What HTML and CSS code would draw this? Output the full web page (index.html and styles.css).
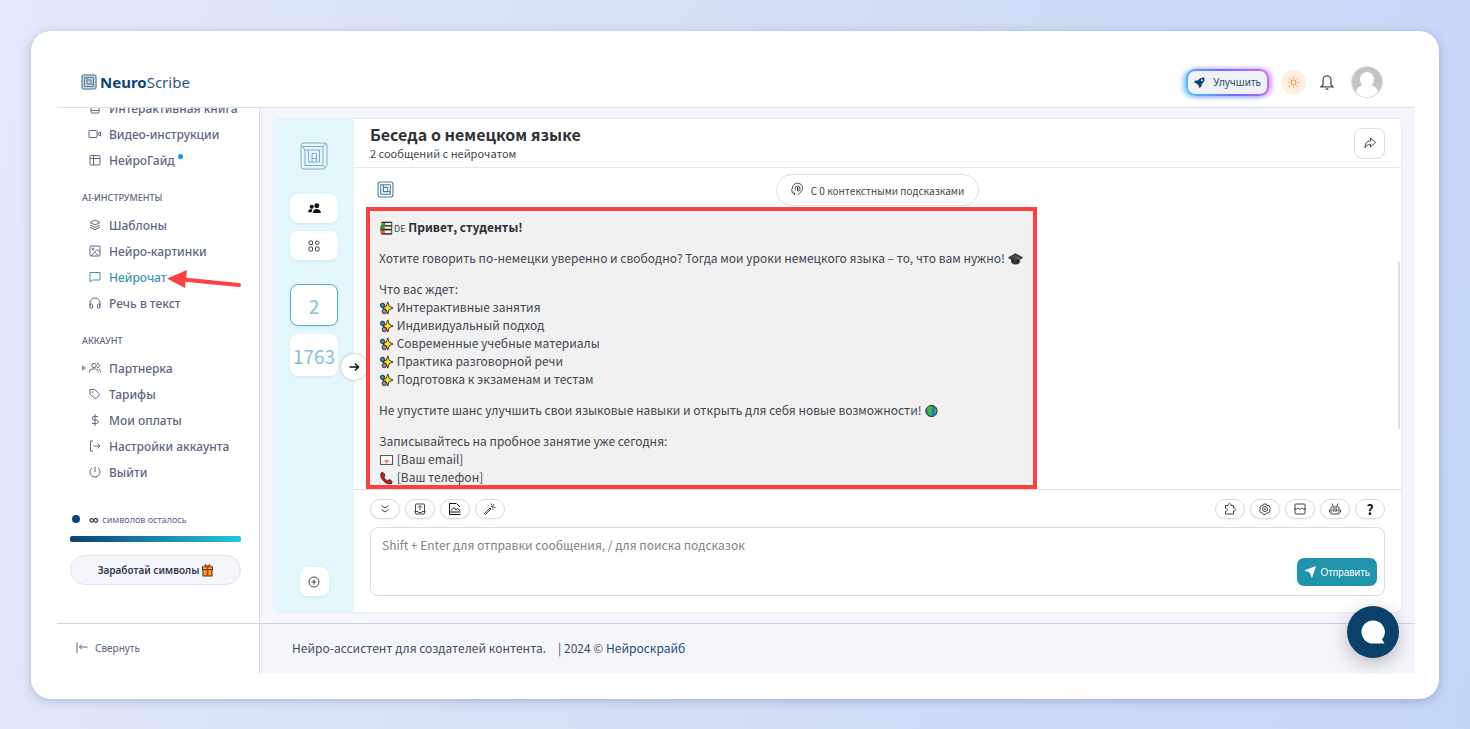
FILE: index.html
```
<!DOCTYPE html>
<html lang="ru">
<head>
  <meta charset="UTF-8">
  <meta name="viewport" content="width=device-width, initial-scale=1.0">
  <title>NeuroScribe</title>
  <link rel="stylesheet" href="styles.css">
</head>
<body>
  <!-- shared icons -->
  <svg class="sprite" aria-hidden="true">
    <symbol id="logo" viewBox="0 0 28 28">
      <path d="M4 1h21q2 0 2 2v20l-3 4H4q-3 0-3-3V4q0-3 3-3z"/>
      <path d="M2 4.500h21v19H5V8h14.500v12H8.500V8M12 20v-8.500h4.500V20M12 16.500h4.500M23 4.500l3-3M23 23.500l2 2M5 8L2 4.500"/>
    </symbol>
    <symbol id="logo-small" viewBox="0 0 16 16">
      <rect x="1" y="1" width="14" height="14" rx="2"/>
      <path d="M3.500 12.500v-9h9v9zM6 3.500V10h6.500M10 10V6H6"/>
    </symbol>
    <symbol id="sparkles" viewBox="0 0 16 16">
      <circle cx="3.500" cy="5" r="2.500" fill="#2a8fb0" stroke="#222"/>
      <circle cx="5.500" cy="12" r="2.500" fill="#c77c95" stroke="#222"/>
      <path d="M9.500 1l1.500 5 4.500 2-4.500 2-1.500 5-1.800-5L3.500 8l4.200-2z" fill="#ffe21f" stroke="#222"/>
    </symbol>
  </svg>

  <div class="card">
    <div class="app">
      <header class="topbar">
        <a class="brand" href="#"><svg class="logo"><use href="#logo-small"/></svg><span><b>Neuro</b>Scribe</span></a>
        <div class="topbar-actions">
          <button class="upgrade" type="button">
            <svg viewBox="0 0 12 12" width="11" height="11"><path d="M11.500.5C8 .3 6 1.500 4.500 3.500L1 4 0 6l2.500.7L5.300 9.500l.2 2.500L8 10.500l.5-3C10.800 6 11.700 4 11.500.5z" fill="#0b4172"/><circle cx="8.500" cy="3.500" r="1" fill="#fff"/></svg>
            Улучшить
          </button>
          <button class="theme" type="button" aria-label="Тема">
            <svg class="icon" viewBox="0 0 24 24"><circle cx="12" cy="12" r="4.500"/><path d="M12 1v3M12 20v3M1 12h3M20 12h3M4.200 4.200l2.100 2.100M17.700 17.700l2.100 2.100M4.200 19.800l2.100-2.100M17.700 6.300l2.100-2.100"/></svg>
          </button>
          <button class="bell" type="button" aria-label="Уведомления">
            <svg viewBox="0 0 16 18" width="14" height="16"><path d="M3.500 12V6.500a4.500 4.500 0 0 1 9 0V12l2.500 2.500H1zM6.500 17h3"/></svg>
          </button>
          <a class="avatar" href="#" aria-label="Профиль">
            <svg viewBox="0 0 32 32"><circle cx="16" cy="16" r="15.500" fill="#c4c4c4" stroke="#dcdcdc"/><ellipse cx="16" cy="13.500" rx="7" ry="7.500" fill="#fff"/><path d="M5 26c1-5 5-7 8-7h6c3 0 7 2 8 7-6 7-16 7-22 0z" fill="#fff"/></svg>
          </a>
        </div>
      </header>

      <aside class="sidebar">
        <nav class="menu">
          <a href="#"><svg class="icon" viewBox="0 0 24 24"><rect x="4" y="2" width="16" height="20" rx="2"/><path d="M4 17h16M8 7h8"/></svg>Интерактивная книга</a>
          <a href="#"><svg class="icon" viewBox="0 0 24 24"><rect x="0" y="5" width="16" height="14" rx="1"/><path d="M18 11l5-3v8l-5-3z"/></svg>Видео-инструкции</a>
          <a href="#"><svg class="icon" viewBox="0 0 24 24"><rect x="2" y="3" width="20" height="19" rx="2"/><path d="M2 9h20M9 3v19"/></svg>НейроГайд<i class="dot"></i></a>
          <h2>AI-ИНСТРУМЕНТЫ</h2>
          <a href="#"><svg class="icon" viewBox="0 0 24 24"><path d="M12 2l10 5-10 5L2 7zM2 12l10 5 10-5M2 16.500l10 5 10-5"/></svg>Шаблоны</a>
          <a href="#"><svg class="icon" viewBox="0 0 24 24"><rect x="2" y="2" width="20" height="20" rx="2"/><circle cx="8" cy="8" r="2"/><path d="M22 14l-6-5L4 22M12 15l6 6"/></svg>Нейро-картинки</a>
          <a class="active" href="#"><svg class="icon" viewBox="0 0 24 24"><path d="M2 3h20v15H7l-5 4z"/></svg>Нейрочат
            <svg class="pointer" viewBox="0 0 76 20"><path d="M16 9.500l56 5.500" stroke="#fb4141" stroke-width="4" stroke-linecap="round"/><path d="M0 8.500L20 0l-2 18z" fill="#fb4141"/></svg>
          </a>
          <a href="#"><svg class="icon" viewBox="0 0 24 24"><path d="M2 19v-7a10 10 0 0 1 20 0v7M2 14h3a2 2 0 0 1 2 2v4a2 2 0 0 1-5 0zM22 14h-3a2 2 0 0 0-2 2v4a2 2 0 0 0 5 0z"/></svg>Речь в текст</a>
          <h2>АККАУНТ</h2>
          <a class="has-sub" href="#"><svg class="icon" viewBox="0 0 24 24"><circle cx="10" cy="7" r="4.500"/><path d="M1 21v-2a5 5 0 0 1 5-5h7a5 5 0 0 1 5 5v2M16 2.500a4.500 4.500 0 0 1 0 9M20 14.500a5 5 0 0 1 3 4.500v2"/></svg>Партнерка</a>
          <a href="#"><svg class="icon" viewBox="0 0 24 24"><path d="M2 3h9l11 10-9 9L2 12z"/><circle cx="7" cy="8" r="1"/></svg>Тарифы</a>
          <a href="#"><svg class="icon" viewBox="0 0 24 24"><path d="M12 0v24M18 5H10a3.500 3.500 0 0 0 0 7h5a3.500 3.500 0 0 1 0 7H6"/></svg>Мои оплаты</a>
          <a href="#"><svg class="icon" viewBox="0 0 24 24"><path d="M8 2H3v20h5M9 12h13M17 7l5 5-5 5"/></svg>Настройки аккаунта</a>
          <a href="#"><svg class="icon" viewBox="0 0 24 24"><path d="M12 1v11M18 4a10 10 0 1 1-12 0"/></svg>Выйти</a>
        </nav>
        <div class="quota">
          <p><i></i><b>∞</b> символов осталось</p>
          <div class="quota-bar"></div>
          <button type="button">Заработай символы
            <svg viewBox="0 0 12 14" width="11" height="13"><rect x="1" y="5" width="10" height="8" fill="#f9a01b" stroke="#3a2a18"/><rect x=".5" y="3" width="11" height="3" fill="#ffc02e" stroke="#3a2a18"/><path d="M6 3v10" stroke="#d8321c" stroke-width="2"/><path d="M6 3L3 .5M6 3l3-2.500" stroke="#d8321c" stroke-width="2"/></svg>
          </button>
        </div>
      </aside>

      <main class="content">
        <section class="chat">
          <div class="rail">
            <svg class="logo"><use href="#logo"/></svg>
            <button class="people" type="button" aria-label="Участники"><svg viewBox="0 0 14 12" width="13" height="11"><circle cx="4" cy="4" r="2.200"/><circle cx="9.500" cy="3" r="2.700"/><path d="M0 10c0-4 4-4 5-3-1 1-1 2-1 3zM5 11c0-6 9-6 9 0z"/></svg></button>
            <button type="button" aria-label="Категории"><svg class="icon" viewBox="0 0 24 24"><rect x="2" y="2" width="7" height="7" rx="1"/><rect x="15" y="2" width="7" height="7" rx="3"/><rect x="2" y="14" width="7" height="8" rx="1"/><rect x="15" y="14" width="7" height="8" rx="1"/></svg></button>
            <button class="count selected" type="button">2</button>
            <button class="count" type="button">1763</button>
            <button class="add" type="button" aria-label="Новый чат"><svg class="icon" viewBox="0 0 24 24"><circle cx="12" cy="12" r="10"/><path d="M12 7v10M7 12h10"/></svg></button>
            <button class="toggle" type="button" aria-label="Развернуть"><svg class="icon bold" viewBox="0 0 24 24"><path d="M3 12h18M14 5l7 7-7 7"/></svg></button>
          </div>

          <div class="dialog">
            <div class="dialog-head">
              <div>
                <h1>Беседа о немецком языке</h1>
                <p>2 сообщений с нейрочатом</p>
              </div>
              <button type="button" aria-label="Поделиться"><svg class="icon" viewBox="0 0 24 24"><path d="M13 2l10 9-10 9v-5c-6 0-9 2-11 7 0-9 3-14 11-14z"/></svg></button>
            </div>

            <div class="messages">
              <div class="context">
                <svg class="logo"><use href="#logo-small"/></svg>
                <button type="button"><svg class="icon" viewBox="0 0 24 24"><path d="M7 22v-4H4a2 2 0 0 1-2-2v-3L1 12l2-4a10 10 0 1 1 15 9l-5 5"/><path d="M8 9a5 5 0 0 1 10 0 4 4 0 0 1-5 5v-4M10 12a3 3 0 0 1-2-3M13 6v5l4-2"/></svg>С 0 контекстными подсказками</button>
              </div>
              <article class="bubble">
                <p><svg class="emoji" viewBox="0 0 16 16"><path d="M3 1.500h11v4H3zM2 5.500h12v4H2zM3 10h11v4.500H3z" fill="#f7efdb" stroke="#222"/><path d="M2 2h5v3H2z" fill="#55a630"/><path d="M1 6h5v4H1z" fill="#338a4c"/><path d="M1 10.500h5V14H1z" fill="#e0582b"/><path d="M2 1.500h12M1 10h12M2 15h12" stroke="#222"/></svg><small>DE</small> <b>Привет, студенты!</b></p>
                <p>Хотите говорить по-немецки уверенно и свободно? Тогда мои уроки немецкого языка – то, что вам нужно! <svg class="emoji" viewBox="0 0 16 16"><path d="M3 8v4c2 3 8 3 10 0V8z" fill="#333"/><path d="M0 6.500L8 2l8 4.500L8 11z" fill="#454545" stroke="#222"/><path d="M8 6l5 2v3" stroke="#a08a4c"/></svg></p>
                <p>Что вас ждет:<br>
                  <svg class="emoji"><use href="#sparkles"/></svg> Интерактивные занятия<br>
                  <svg class="emoji"><use href="#sparkles"/></svg> Индивидуальный подход<br>
                  <svg class="emoji"><use href="#sparkles"/></svg> Современные учебные материалы<br>
                  <svg class="emoji"><use href="#sparkles"/></svg> Практика разговорной речи<br>
                  <svg class="emoji"><use href="#sparkles"/></svg> Подготовка к экзаменам и тестам</p>
                <p>Не упустите шанс улучшить свои языковые навыки и открыть для себя новые возможности! <svg class="emoji" viewBox="0 0 16 16"><circle cx="8" cy="8" r="6.500" fill="#1d78c8" stroke="#222"/><path d="M3 5c2-4 6-3 6-1s-2 2-1 4 1 5-1 5-4-4-4-8zM11 5l3 2-1 4-2-2z" fill="#4caf3a"/></svg></p>
                <p>Записывайтесь на пробное занятие уже сегодня:<br>
                  <svg class="emoji" viewBox="0 0 16 16"><rect x="1" y="3" width="14" height="10" fill="#fff" stroke="#333"/><path d="M2 12l4-4M14 12l-4-4" stroke="#bbb"/><path d="M6 8h4v2l-2 2-2-2z" fill="#ef7b68"/></svg> [Ваш email]<br>
                  <svg class="emoji" viewBox="0 0 16 16"><path d="M2 2c2-1 4 1 4 3L5 7c1 2 2 3 4 4l2-1c2 0 4 2 3 4-5 3-15-5-12-12z" fill="#d41d1d" stroke="#2a1111"/></svg> [Ваш телефон]</p>
              </article>
              <div class="scroll-thumb"></div>
            </div>

            <form class="composer">
              <div class="tools">
                <button type="button" aria-label="Свернуть"><svg class="icon" viewBox="0 0 24 24"><path d="M5 5l7 5 7-5M5 13l7 5 7-5"/></svg></button>
                <button type="button" aria-label="Загрузить"><svg class="icon" viewBox="0 0 24 24"><rect x="3" y="2" width="18" height="20" rx="1"/><path d="M12 14V6M8 9l4-4 4 4M1 17h7l1 2h6l1-2h7"/></svg></button>
                <button type="button" aria-label="Изображение"><svg class="icon bold" viewBox="0 0 24 24"><path d="M15 1H1v22h22M1 18h22M4 15l6-6 4 5 3-3 5 4M16 2l6 6"/></svg></button>
                <button type="button" aria-label="Улучшить запрос"><svg class="icon" viewBox="0 0 24 24"><path d="M1 21L12 10l2 2L3 23zM9 5l2 1M14 1l1 3M20 2l-2 3M23 9l-3-1M19 14l-2-2M14 7l4-1v5"/></svg></button>
                <span class="spacer"></span>
                <button type="button" aria-label="Плагины"><svg class="icon" viewBox="0 0 24 24"><path d="M3 5h5c-1-5 7-5 6 0h5v5c5-1 5 7 0 6v6H3v-5c5 0 5-6 0-6z"/></svg></button>
                <button type="button" aria-label="Настройки"><svg class="icon" viewBox="0 0 24 24"><path d="M9 2h6l1 3 4 0 3 6-2 2 1 4-4 3-3 0-2 3H9l-2-3-4-1-2-5 2-2-1-4 4-3 2 0z"/><circle cx="12" cy="12" r="5"/><circle cx="12" cy="12" r="1"/></svg></button>
                <button type="button" aria-label="Шаблон"><svg class="icon" viewBox="0 0 24 24"><rect x="2" y="2" width="20" height="20" rx="1"/><path d="M0 12h5l3-2 4 3 3-3 3 2h6"/></svg></button>
                <button type="button" aria-label="Бот"><svg class="icon" viewBox="0 0 24 24"><rect x="4" y="8" width="16" height="14" rx="1"/><rect x="8" y="12" width="8" height="4"/><path d="M6 1l3 6M18 1l-3 6M1 13v6M23 13v6"/></svg></button>
                <button class="help" type="button">?</button>
              </div>
              <div class="field">
                <textarea aria-label="Сообщение" placeholder="Shift + Enter для отправки сообщения, / для поиска подсказок"></textarea>
                <button type="submit"><svg viewBox="0 0 12 12" width="12" height="12"><path d="M12 0L0 4.500l5.500 1.700L8 12z" fill="#fff"/></svg>Отправить</button>
              </div>
            </form>
          </div>
        </section>
      </main>

      <button class="collapse" type="button"><svg class="icon" viewBox="0 0 24 24"><path d="M2 1v21M7 10h16M12 5l-5 5 5 5"/></svg>Свернуть</button>
      <footer class="footer"><span>Нейро-ассистент для создателей контента.</span><span>| 2024 © <a href="#">Нейроскрайб</a></span></footer>
      <button class="support" type="button" aria-label="Поддержка"><svg viewBox="0 0 24 24" width="24" height="24"><path d="M12 .5a11.500 11.500 0 1 0 0 23h11.500l-2.500-4A11.500 11.500 0 0 0 12 .5z" fill="#fff"/></svg></button>
    </div>
  </div>
</body>
</html>
```
FILE: styles.css
```
* {
  box-sizing: border-box;
}
body {
  margin: 0;
  height: 100vh;
  padding: 31px 31px 30px;
  background: linear-gradient(100deg, #e2e9f8, #c5d5f6);
  font-family: "Noto Sans", sans-serif;
  color: #5d6783;
}
button {
  margin: 0;
  padding: 0;
  font: inherit;
  color: inherit;
  background: none;
  border: none;
  cursor: pointer;
}
a {
  color: inherit;
  text-decoration: none;
}
h1, h2, p {
  margin: 0;
}
svg {
  flex: none;
  fill: none;
}
.sprite {
  position: absolute;
  width: 0;
  height: 0;
}
.icon {
  width: 12px;
  height: 12px;
  stroke: currentColor;
  stroke-width: 2;
  stroke-linejoin: round;
  overflow: visible;
}
.icon.bold {
  stroke-width: 3;
  color: #111;
}
.logo {
  width: 28px;
  height: 28px;
  stroke: #7fa9c2;
  stroke-width: 1;
}

.card {
  height: 100%;
  padding: 26px 24px 26px 26px;
  background: #fff;
  border-radius: 20px;
  box-shadow: 0 2px 10px rgba(60, 80, 140, 0.3);
}
.app {
  position: relative;
  height: 100%;
  display: grid;
  grid-template-columns: 203px 1fr;
  grid-template-rows: 51px minmax(0, 1fr) 50px;
}

/* top bar */
.topbar {
  grid-column: 1 / 3;
  display: flex;
  align-items: center;
  justify-content: space-between;
  padding: 0 32px 0 24px;
  border-bottom: 1px solid #dadeec;
}
.brand {
  display: flex;
  align-items: center;
  gap: 3px;
  font-size: 15px;
  color: #2d5788;
}
.brand b {
  color: #0b4479;
}
.brand .logo {
  width: 16px;
  height: 16px;
  stroke: #5f8299;
  background: #c3d3dd;
  border-radius: 3px;
}
.topbar-actions {
  display: flex;
  align-items: center;
}
.upgrade {
  display: flex;
  align-items: center;
  gap: 8px;
  height: 27px;
  padding: 0 6px;
  font-size: 10px;
  color: #2d4a6c;
  border: 2px solid transparent;
  border-radius: 9px;
  background: linear-gradient(#eff3f9, #eff3f9) padding-box, linear-gradient(60deg, #4fc3ff, #6a6cff, #d86cf5) border-box;
  box-shadow: -3px 1px 5px rgba(70, 160, 255, 0.6), 3px 0 5px rgba(200, 90, 245, 0.6);
}
.theme {
  display: flex;
  align-items: center;
  justify-content: center;
  width: 25px;
  height: 25px;
  margin-left: 12px;
  border-radius: 50%;
  background: #fff1df;
  color: #f39a42;
}
.theme .icon {
  width: 13px;
  height: 13px;
}
.bell {
  display: flex;
  margin: 0 17px 0 14px;
  stroke: #4b5163;
  stroke-width: 1.5;
}
.avatar {
  display: flex;
  width: 32px;
  height: 32px;
}

/* sidebar */
.sidebar {
  display: flex;
  flex-direction: column;
  border-right: 1px solid #d6dae6;
}
.menu {
  flex: 1;
  min-height: 0;
  display: flex;
  flex-direction: column;
  justify-content: flex-end;
  overflow: hidden;
}
.menu a {
  position: relative;
  flex: none;
  display: flex;
  align-items: center;
  gap: 8px;
  height: 26px;
  padding-left: 32px;
  font-size: 12px;
  font-weight: 500;
}
.menu a.active {
  color: #3f93b5;
}
.menu h2 {
  flex: none;
  height: 39px;
  padding: 12px 0 0 25px;
  line-height: 26px;
  font-size: 9px;
  font-weight: 500;
}
.dot {
  width: 5px;
  height: 5px;
  margin: -8px 0 0 -5px;
  border-radius: 50%;
  background: #0d9bef;
}
.has-sub::before {
  content: "";
  position: absolute;
  left: 25px;
  border: 3px solid transparent;
  border-left: 4px solid #8690a8;
}
.pointer {
  position: absolute;
  left: 110px;
  top: 6px;
  width: 76px;
  height: 20px;
}
.quota {
  padding: 28px 18px 38px 13px;
}
.quota p {
  display: flex;
  align-items: center;
  gap: 4px;
  height: 12px;
  margin-bottom: 11px;
  font-size: 9px;
}
.quota p b {
  font-size: 13px;
  color: #252e46;
}
.quota i {
  width: 8px;
  height: 8px;
  margin: 0 5px 0 2px;
  border-radius: 50%;
  background: #0b4479;
}
.quota-bar {
  height: 6px;
  border-radius: 2px;
  background: linear-gradient(90deg, #0b4172, #25c7dd);
}
.quota button {
  display: flex;
  align-items: center;
  justify-content: center;
  gap: 3px;
  width: 100%;
  height: 30px;
  margin-top: 13px;
  border: 1px solid #e2e5ed;
  border-radius: 15px;
  background: #f5f6fb;
  font-size: 10px;
  font-weight: 600;
  color: #303950;
}
.collapse {
  display: flex;
  align-items: center;
  gap: 7px;
  padding: 0 0 2px 19px;
  font-size: 10px;
  border-top: 1px solid #cfd4e2;
  border-right: 1px solid #d6dae6;
}
.footer {
  display: flex;
  align-items: center;
  gap: 12px;
  padding: 0 0 3px 32px;
  background: #f5f6fb;
  border-top: 1px solid #cfd4e2;
  font: 12px "Noto Sans CJK SC", sans-serif;
  color: #454c5c;
}
.footer a {
  color: #1f4c7a;
}
.support {
  position: absolute;
  right: 16px;
  bottom: 15px;
  display: flex;
  align-items: center;
  justify-content: center;
  width: 52px;
  height: 52px;
  border-radius: 50%;
  background: #0b4168;
  box-shadow: 0 5px 18px rgba(0, 0, 0, 0.25);
}

/* chat */
.content {
  display: flex;
  padding: 11px 14px;
  background: #f5f6fb;
}
.chat {
  flex: 1;
  display: flex;
  min-width: 0;
  border-radius: 5px;
  background: #fff;
  box-shadow: 0 0 2px #cbd2e0;
  font-family: "Noto Sans CJK SC", sans-serif;
  color: #40454d;
}
.rail {
  position: relative;
  width: 80px;
  display: flex;
  flex-direction: column;
  align-items: center;
  padding: 23px 0 16px;
  border-radius: 5px 0 0 5px;
  background: #e5f7fe;
}
.rail button {
  display: flex;
  align-items: center;
  justify-content: center;
  width: 48px;
  height: 29px;
  margin-bottom: 8px;
  border-radius: 8px;
  background: #fff;
  box-shadow: 0 1px 3px rgba(80, 140, 170, 0.15);
}
.rail .people {
  margin-top: 24px;
}
.people svg {
  fill: #111;
}
.rail .count {
  height: 42px;
  font-size: 19px;
  color: #84c2d3;
}
.rail .selected {
  margin-top: 16px;
  border: 1px solid #50b0c6;
}
.rail .add {
  width: 29px;
  margin: auto 0 0;
}
.rail .toggle {
  position: absolute;
  right: -13px;
  top: 235px;
  width: 26px;
  height: 26px;
  border-radius: 50%;
  box-shadow: 0 0 3px #aaa;
}
.dialog {
  flex: 1;
  min-width: 0;
  display: flex;
  flex-direction: column;
}
.dialog-head {
  display: flex;
  align-items: center;
  justify-content: space-between;
  height: 49px;
  padding: 0 16px;
  border-bottom: 1px solid #e8e8ea;
}
.dialog-head h1 {
  font-size: 16px;
  line-height: 20px;
  color: #303236;
}
.dialog-head p {
  font-size: 11px;
  line-height: 18px;
}
.dialog-head button {
  display: flex;
  align-items: center;
  justify-content: center;
  width: 31px;
  height: 31px;
  border: 1px solid #dfdfe1;
  border-radius: 8px;
}
.messages {
  position: relative;
  flex: 1;
  min-height: 0;
  display: flex;
  flex-direction: column;
  align-items: flex-start;
  padding: 6px 12px 0;
}
.context {
  align-self: stretch;
  display: grid;
  grid-template-columns: 1fr auto 1fr;
  height: 33px;
  padding: 0 11px;
}
.context .logo {
  width: 17px;
  height: 17px;
  margin-top: 7px;
  stroke: #46799c;
}
.context button {
  display: flex;
  align-items: center;
  gap: 8px;
  height: 32px;
  padding: 0 14px;
  border: 1px solid #e0e0e2;
  border-radius: 16px;
  font-size: 10px;
}
.bubble {
  flex: 1;
  min-height: 0;
  max-width: 100%;
  padding: 7px 10px 0 9px;
  overflow: hidden;
  border: 4px solid #fb4141;
  background: #f1f1f1;
  font-size: 12px;
  line-height: 18px;
}
.bubble p {
  margin-bottom: 13px;
}
.bubble small {
  font-size: 9px;
  line-height: 9px;
}
.bubble b {
  color: #2b2e33;
}
.emoji {
  width: 15px;
  height: 14px;
  margin: -4px 0;
  vertical-align: 1px;
}
.scroll-thumb {
  position: absolute;
  right: 1px;
  top: 94px;
  width: 2px;
  height: 167px;
  background: #dedfe3;
}
.composer {
  padding: 9px 16px 16px;
  border-top: 1px solid #dcdde0;
}
.tools {
  display: flex;
  gap: 5px;
}
.tools button {
  display: flex;
  align-items: center;
  justify-content: center;
  width: 30px;
  height: 20px;
  border: 1px solid #dadadc;
  border-radius: 10px;
  box-shadow: 0 1px 2px rgba(0, 0, 0, 0.06);
}
.tools .bold {
  stroke-width: 2;
}
.tools .help {
  font-size: 14px;
  font-weight: bold;
  line-height: 18px;
  color: #111;
}
.spacer {
  flex: 1;
}
.field {
  display: flex;
  align-items: flex-end;
  height: 69px;
  margin-top: 8px;
  padding: 7px 7px 9px;
  border: 1px solid #dcdcde;
  border-radius: 8px;
}
.field textarea {
  flex: 1;
  align-self: stretch;
  padding: 0 4px;
  border: none;
  outline: none;
  resize: none;
  background: none;
  font: 12px/20px "Noto Sans CJK SC", sans-serif;
}
.field textarea::placeholder {
  color: #808389;
}
.field button {
  display: flex;
  align-items: center;
  gap: 4px;
  height: 28px;
  padding: 0 7px;
  border-radius: 7px;
  background: #2094ad;
  font: 10px "Liberation Sans", sans-serif;
  color: #fff;
}
```
